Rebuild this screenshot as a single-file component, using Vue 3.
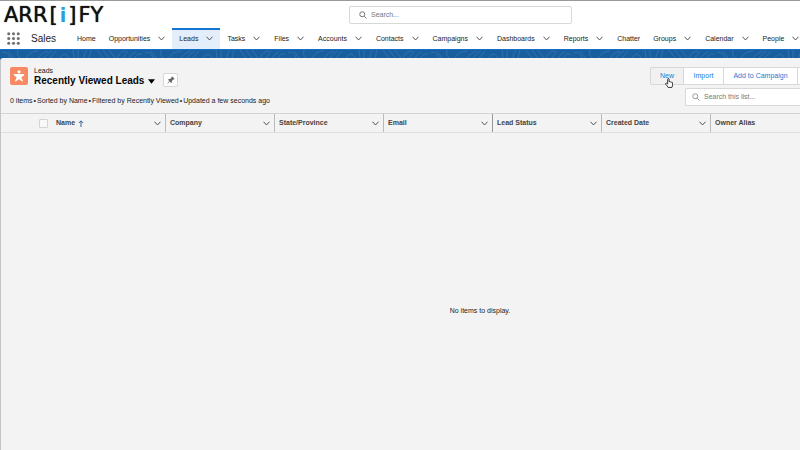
<script setup>
const tabs = [
  { label: 'Home' },
  { label: 'Opportunities', menu: true },
  { label: 'Leads', menu: true, active: true },
  { label: 'Tasks', menu: true },
  { label: 'Files', menu: true },
  { label: 'Accounts', menu: true },
  { label: 'Contacts', menu: true },
  { label: 'Campaigns', menu: true },
  { label: 'Dashboards', menu: true },
  { label: 'Reports', menu: true },
  { label: 'Chatter' },
  { label: 'Groups', menu: true },
  { label: 'Calendar', menu: true },
  { label: 'People', menu: true },
]
const columns = ['Name', 'Company', 'State/Province', 'Email', 'Lead Status', 'Created Date', 'Owner Alias']
const status = ['0 items', 'Sorted by Name', 'Filtered by Recently Viewed', 'Updated a few seconds ago']
const dots = [0, 1, 2, 3, 4, 5, 6, 7, 8]
</script>

<template>
  <div class="page">
    <header class="top">
      <div class="logo" aria-label="Arrify">
        <span>ARR</span><span>[</span><b class="logo-i">i</b><span>]</span><span>FY</span>
      </div>
      <label class="search global">
        <svg viewBox="0 0 16 16" aria-hidden="true"><circle cx="6.5" cy="6.5" r="5" /><path d="M10.3 10.3 15 15" /></svg>
        <input type="search" placeholder="Search..." aria-label="Search" />
      </label>
    </header>

    <nav class="nav">
      <button class="launcher" type="button" aria-label="App Launcher">
        <svg viewBox="0 0 12 12"><circle v-for="d in dots" :key="d" :cx="1.6 + (d % 3) * 4.4" :cy="1.6 + Math.floor(d / 3) * 4.4" r="1.4" /></svg>
      </button>
      <span class="app">Sales</span>
      <a v-for="t in tabs" :key="t.label" href="#" class="tab" :class="{ active: t.active, plain: !t.menu }">
        {{ t.label }}
        <svg v-if="t.menu" class="chev" viewBox="0 0 7 5" aria-hidden="true"><path d="M.5.7 3.5 4 6.5.7" /></svg>
      </a>
    </nav>

    <main class="stage">
      <svg class="contours" aria-hidden="true">
        <defs>
          <pattern id="topo" width="143" height="8" patternUnits="userSpaceOnUse">
            <path d="M2 3q5-3 8 5M8 1l5 7M18 0q-2 5 2 8M26 8q4-7 12-7M38 8q4-6 10-7M44 8q4-6 8-7M50 8l6-7M60 8q5-8 9 0M73 0l1 8M78 0v8M84 8q0-5 3-8M89 8l2-8M97 0l6 8M103 0l6 8M109 0l6 8M117 8q3-7 9-7M123 8l5-7M129 8q3-5 7-6M135 8q2-5 7-4" />
          </pattern>
        </defs>
        <rect width="100%" height="8" fill="url(#topo)" />
      </svg>
      <section class="card">
        <div class="head">
          <div>
            <div class="title">
              <svg class="entity" viewBox="0 0 18 18" aria-hidden="true">
                <rect width="18" height="18" rx="2" />
                <circle cx="9" cy="4.8" r="1.6" />
                <path d="M4 7.1h10q.7.7 0 1.2L11.4 10.400l1.500 3.500q-.3.8-1 .4L9 12.200l-2.900 2.100q-.7.400-1-.4L6.600 10.400 4 8.300q-.7-.5 0-1.200Z" />
              </svg>
              <div>
                <p class="kind">Leads</p>
                <h1>Recently Viewed Leads <svg class="caret" viewBox="0 0 8 5" aria-hidden="true"><path d="M0 0h8L4 5Z" /></svg></h1>
              </div>
              <button class="pin" type="button" aria-label="Pin this list view">
                <svg viewBox="0 0 10 10"><path d="M6 1.2 8.8 4 8 4.5 7.5 4.3 5.9 6 5.8 7.6 5.2 8 2 4.8 2.4 4.2 4 4.1 5.7 2.5 5.5 2ZM3.2 6.2l.6.6L1.5 8.7l-.2-.2Z" /></svg>
              </button>
            </div>
            <p class="status">
              <template v-for="(s, i) in status" :key="s">
                <span v-if="i">•</span>
                <span>{{ s }}</span>
              </template>
            </p>
          </div>
          <div class="tools">
            <div class="actions">
              <button type="button" class="hover">New</button>
              <button type="button">Import</button>
              <button type="button">Add to Campaign</button>
              <button type="button" aria-label="More actions"></button>
            </div>
            <label class="search list">
              <svg viewBox="0 0 16 16" aria-hidden="true"><circle cx="6.5" cy="6.5" r="5" /><path d="M10.3 10.3 15 15" /></svg>
              <input type="search" placeholder="Search this list..." aria-label="Search this list" />
            </label>
          </div>
        </div>
        <div class="scroller">
          <table>
            <thead>
              <tr>
                <th class="pick"><input type="checkbox" aria-label="Select all items" /></th>
                <th v-for="c in columns" :key="c" :class="{ first: c === 'Name', strong: c === 'Email' }">
                  <div class="cell">
                    <span>{{ c }}</span>
                    <svg v-if="c === 'Name'" class="sort" viewBox="0 0 6 7" aria-hidden="true"><path d="M3 7V1M.8 3 3 .8 5.2 3" /></svg>
                    <svg class="chev" viewBox="0 0 7 5" aria-hidden="true"><path d="M.5.7 3.5 4 6.5.7" /></svg>
                  </div>
                </th>
              </tr>
            </thead>
          </table>
        </div>
        <p class="empty">No items to display.</p>
      </section>
      <svg class="pointer" viewBox="0 0 9 11" aria-hidden="true">
        <path d="M3 6V1.4q0-.9.8-.9t.8.9V4q1-.4 1.4.3 1-.3 1.3.4 1.2-.2 1.2.8v2q0 1.4-.8 3H3.500Q2.500 8.500.7 6.800.3 5.900 1.200 5.700 2 5.500 3 6.700Z" />
      </svg>
    </main>
  </div>
</template>

<style>
body {
  margin: 0;
}
</style>

<style scoped>
.page {
  display: flex;
  flex-direction: column;
  min-height: 100vh;
  box-sizing: border-box;
  overflow: hidden;
  border-top: 1px solid #999;
  background: #fff;
  color: #222;
  font: 7px/10px "Liberation Sans", Arial, sans-serif;
}
p, h1 { margin: 0; }
button, input { font: inherit; }
svg { flex: none; }
.top {
  display: grid;
  grid-template-columns: 345fr 223fr 228fr;
  align-items: center;
  height: 27px;
  padding-left: 4px;
}
.logo {
  display: flex;
  gap: 2px;
  color: #111;
  font: 21px/24px "DejaVu Sans", sans-serif;
  text-shadow: 0 0 1px #111;
}
.logo .logo-i { color: #2a9ee0; font-size: 19px; text-shadow: none; }
.search {
  display: flex;
  align-items: center;
  box-sizing: border-box;
  height: 18px;
  gap: 4px;
  padding-left: 9px;
  border: 1px solid #d8d8d8;
  border-radius: 2px;
  background: #fff;
}
.search svg {
  width: 8px;
  height: 8px;
  fill: none;
  stroke: #777;
  stroke-width: 2;
}
.search input {
  flex: 1;
  min-width: 0;
  padding: 0;
  border: 0;
  outline: 0;
  background: none;
}
.search input::placeholder { color: #777; opacity: 1; }
.nav {
  display: flex;
  height: 21px;
  padding-left: 7px;
}
.launcher {
  display: flex;
  flex: none;
  align-items: center;
  width: 24px;
  padding: 0;
  border: 0;
  background: none;
}
.launcher svg { width: 13px; height: 13px; fill: #706e6b; }
.app { flex: none; width: 39px; font-size: 10px; line-height: 21px; }
.tab {
  display: flex;
  align-items: center;
  flex: none;
  gap: 8px;
  padding: 0 7px;
  color: #222;
  text-decoration: none;
}
.tab.plain { padding-right: 6px; }
.active {
  box-shadow: inset 0 2px #1575d2;
  background: #e4eefa;
}
.chev {
  width: 7px;
  height: 5px;
  fill: none;
  stroke: #555;
  stroke-width: 1;
}
.stage {
  position: relative;
  display: flex;
  flex: 1;
  flex-direction: column;
  padding-top: 8px;
  border-top: 1px solid #0f70ca;
  background: linear-gradient(#195e9f 16px, #f3f3f3 16px);
}
.contours {
  position: absolute;
  top: 0;
  left: 0;
  width: 100%;
  height: 8px;
}
.contours path { fill: none; stroke: #3270a6; stroke-width: 1; }
.card {
  flex: 1;
  z-index: 1;
  border-left: 1px solid #c4c4c4;
  border-radius: 3px 0 0 0;
  background: #f3f3f3;
}
.head {
  display: flex;
  justify-content: space-between;
  align-items: flex-start;
  padding: 9px 0 0 9px;
}
.title { display: flex; margin-bottom: 9px; }
.entity { width: 18px; height: 18px; margin-right: 6px; fill: #fff; }
.entity rect { fill: #f88962; }
.kind { line-height: 8px; }
h1 {
  display: flex;
  align-items: center;
  gap: 4px;
  color: #080707;
  font-size: 10px;
  line-height: 12px;
}
.caret { width: 7px; height: 5px; }
.pin {
  display: flex;
  align-items: center;
  justify-content: center;
  align-self: flex-end;
  width: 15px;
  height: 14px;
  margin-left: 8px;
  padding: 0;
  border: 1px solid #d8d8d8;
  border-radius: 2px;
  background: #fff;
}
.pin svg { width: 10px; height: 10px; fill: #666; }
.status { display: flex; gap: 1px; }
.tools {
  width: 150px;
}
.actions {
  display: grid;
  grid-template-columns: 33px 40px 74px 1fr;
  height: 18px;
}
.actions button {
  min-width: 0;
  padding: 0;
  border: 1px solid #d8d8d8;
  border-right-width: 0;
  background: #fff;
  color: #187bd6;
}
.actions button:first-child { border-radius: 2px 0 0 2px; }
.actions .hover { background: #f1f1f1; }
.list {
  margin: 3px 0 0 35px;
  padding-left: 6px;
  border-right: 0;
  border-radius: 2px 0 0 2px;
}
.list svg { stroke: #999; }
.scroller { overflow: hidden; margin-top: 7px; }
table {
  width: 819px;
  table-layout: fixed;
  border-collapse: separate;
  border-spacing: 0;
  border-top: 1px solid #d3d3d3;
  border-bottom: 1px solid #dedede;
}
th {
  width: 109px;
  height: 18px;
  box-sizing: border-box;
  padding: 0 4px;
  border-right: 1px solid #bbb;
  color: #444;
  text-align: left;
}
.first { width: 114px; }
.strong { border-right-color: #999; }
.pick { width: 51px; padding: 0 4px 0 38px; border-right: 0; }
.pick input {
  display: block;
  width: 9px;
  height: 9px;
  margin: 0;
  appearance: none;
  border: 1px solid #d3d3d3;
  border-radius: 1px;
  background: #f8f8f8;
}
.cell { display: flex; align-items: center; gap: 3px; }
.cell .chev { margin-left: auto; }
.sort { width: 6px; height: 7px; fill: none; stroke: #34628f; }
.empty { padding: 173px 0 40px 159px; text-align: center; }
.pointer {
  position: absolute;
  z-index: 2;
  top: 28px;
  right: 127px;
  width: 8px;
  height: 10px;
  fill: #fff;
  stroke: #222;
  stroke-width: 1;
}
</style>
